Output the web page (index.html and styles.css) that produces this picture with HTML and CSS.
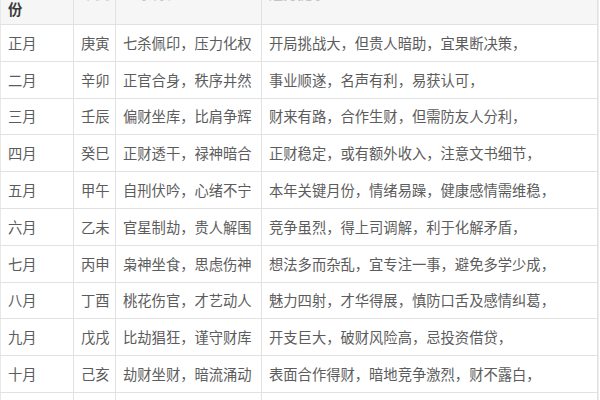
FILE: index.html
```html
<!DOCTYPE html>
<html lang="zh-CN">
<head>
<meta charset="utf-8">
<title>流月运势</title>
<link rel="stylesheet" href="styles.css">
</head>
<body>
<div class="frame">
<table class="fortune">
  <colgroup>
    <col class="c-month">
    <col class="c-gz">
    <col class="c-star">
    <col class="c-tip">
  </colgroup>
  <thead>
    <tr class="head">
      <th class="h-month">月<br>份</th>
      <th class="h-dim">干支</th>
      <th class="h-dim">星象特征</th>
      <th class="h-dim">运势提示</th>
    </tr>
  </thead>
  <tbody>
    <tr><td>正月</td><td>庚寅</td><td>七杀佩印，压力化权</td><td>开局挑战大，但贵人暗助，宜果断决策，</td></tr>
    <tr><td>二月</td><td>辛卯</td><td>正官合身，秩序井然</td><td>事业顺遂，名声有利，易获认可，</td></tr>
    <tr><td>三月</td><td>壬辰</td><td>偏财坐库，比肩争辉</td><td>财来有路，合作生财，但需防友人分利，</td></tr>
    <tr><td>四月</td><td>癸巳</td><td>正财透干，禄神暗合</td><td>正财稳定，或有额外收入，注意文书细节，</td></tr>
    <tr><td>五月</td><td>甲午</td><td>自刑伏吟，心绪不宁</td><td>本年关键月份，情绪易躁，健康感情需维稳，</td></tr>
    <tr><td>六月</td><td>乙未</td><td>官星制劫，贵人解围</td><td>竞争虽烈，得上司调解，利于化解矛盾，</td></tr>
    <tr><td>七月</td><td>丙申</td><td>枭神坐食，思虑伤神</td><td>想法多而杂乱，宜专注一事，避免多学少成，</td></tr>
    <tr><td>八月</td><td>丁酉</td><td>桃花伤官，才艺动人</td><td>魅力四射，才华得展，慎防口舌及感情纠葛，</td></tr>
    <tr><td>九月</td><td>戊戌</td><td>比劫猖狂，谨守财库</td><td>开支巨大，破财风险高，忌投资借贷，</td></tr>
    <tr><td>十月</td><td>己亥</td><td>劫财坐财，暗流涌动</td><td>表面合作得财，暗地竞争激烈，财不露白，</td></tr>
    <tr><td>冬月</td><td>庚子</td><td>伤官见官，言多必失</td><td>口舌是非多，宜低调行事，</td></tr>
  </tbody>
</table>
</div>
</body>
</html>
```

FILE: styles.css
```css
html, body {
  margin: 0;
  padding: 0;
  background: #ffffff;
}

body {
  width: 600px;
  height: 400px;
  overflow: hidden;
  font-family: "Noto Sans CJK SC", "Noto Sans", "Liberation Sans", sans-serif;
}

.frame {
  width: 598px;
  margin-top: -30px;
  border-right: 1px solid #ececec;
}

.fortune {
  width: 597px;
  table-layout: fixed;
  border-collapse: collapse;
  font-size: 14.3px;
  color: #5c5c5c;
}

.c-month { width: 73px; }
.c-gz { width: 42px; }
.c-star { width: 146px; }
.c-tip { width: 336px; }

.fortune th,
.fortune td {
  border: 1px solid #e2e2e2;
  padding: 0 7px;
  text-align: left;
  vertical-align: middle;
  white-space: nowrap;
  overflow: hidden;
}

.fortune td:first-child,
.fortune th:first-child {
  border-left: 1px solid #e8e8e8;
}

.head {
  height: 54px;
  background: #f6f6f6;
}

.fortune th {
  font-weight: bold;
  line-height: 22px;
  color: #3a3a3a;
}

.fortune th.h-dim {
  color: #c4c4c4;
  font-weight: normal;
  padding-bottom: 10px;
}

.fortune tbody tr {
  height: 36.8px;
}

.fortune td {
  line-height: 20px;
}
```
